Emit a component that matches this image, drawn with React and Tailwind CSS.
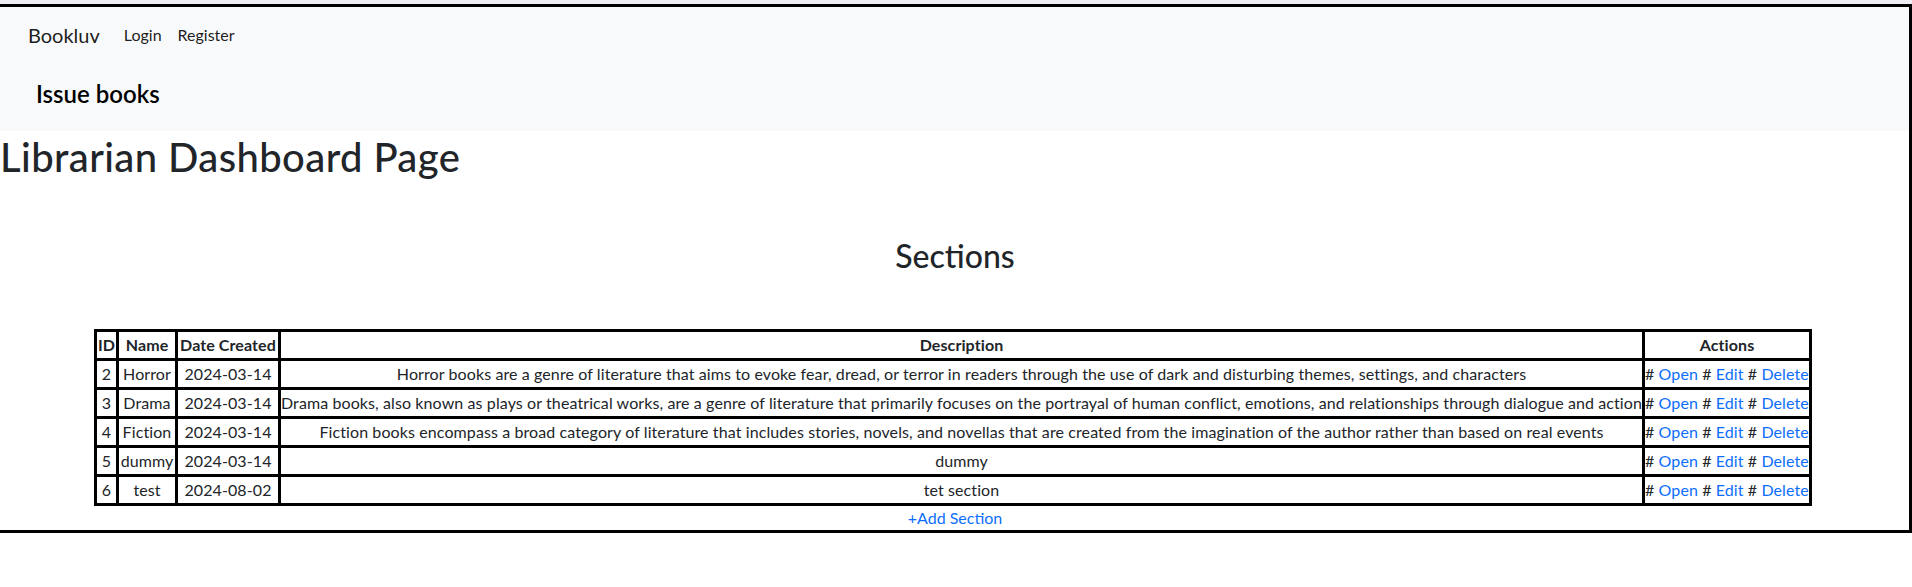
import React from "react";

const sections = [
  { id: 2, name: "Horror", date: "2024-03-14", description: "Horror books are a genre of literature that aims to evoke fear, dread, or terror in readers through the use of dark and disturbing themes, settings, and characters" },
  { id: 3, name: "Drama", date: "2024-03-14", description: "Drama books, also known as plays or theatrical works, are a genre of literature that primarily focuses on the portrayal of human conflict, emotions, and relationships through dialogue and action" },
  { id: 4, name: "Fiction", date: "2024-03-14", description: "Fiction books encompass a broad category of literature that includes stories, novels, and novellas that are created from the imagination of the author rather than based on real events" },
  { id: 5, name: "dummy", date: "2024-03-14", description: "dummy" },
  { id: 6, name: "test", date: "2024-08-02", description: "tet section" },
];

export default function App() {
  const cell = "border-[3px] border-black px-0 py-px text-center whitespace-nowrap";

  return (
    <div className="min-h-screen bg-white pt-[4px] text-[#212529]" style={{ fontFamily: "Lato, 'Noto Sans', sans-serif" }}>
      <div className="bg-[#efeff3] h-[4px] -mt-[4px]" />
      <div className="border-[3px] border-l-0 border-black">
        {/* navbar */}
        <nav className="bg-[#f8f9fa] h-[124px]">
          <div className="flex items-start pt-[8px] pl-[28px]">
            <a href="#" className="text-[20px] leading-[30px] pt-[5px] text-black/90 mr-[24px]">Bookluv</a>
            <a href="#" className="text-[16px] leading-[24px] pt-[8px] text-black/90 mr-[16px]">Login</a>
            <a href="#" className="text-[16px] leading-[24px] pt-[8px] text-black/90">Register</a>
          </div>
          <h4 className="mt-[30px] pl-[36px] text-[24px] leading-[1.2] font-semibold text-black">Issue books</h4>
        </nav>

        <h1 className="mt-[2px] text-[40px] leading-[48px] font-medium tracking-[0.4px]">Librarian Dashboard Page</h1>

        <h2 className="mt-[56px] text-center text-[32px] leading-[38.4px] font-medium pl-[1px]">Sections</h2>

        <table className="mt-[54px] ml-[94px] w-[1718px] table-fixed border-collapse text-[16px] leading-[24px] tracking-[0.1px]">
          <thead>
            <tr>
              <th className={`${cell} w-[22px] font-bold`}>ID</th>
              <th className={`${cell} w-[59px] font-bold`}>Name</th>
              <th className={`${cell} w-[103px] font-bold`}>Date Created</th>
              <th className={`${cell} font-bold`}>Description</th>
              <th className={`${cell} w-[167px] font-bold`}>Actions</th>
            </tr>
          </thead>
          <tbody>
            {sections.map((s) => (
              <tr key={s.id}>
                <td className={cell}>{s.id}</td>
                <td className={cell}>{s.name}</td>
                <td className={cell}>{s.date}</td>
                <td className={cell}>{s.description}</td>
                <td className={`${cell} !text-left`}>
                  # <a href="#" className="text-[#0d6efd]">Open</a> # <a href="#" className="text-[#0d6efd]">Edit</a> # <a href="#" className="text-[#0d6efd]">Delete</a>
                </td>
              </tr>
            ))}
          </tbody>
        </table>
        <div className="text-center pl-[1px] text-[16px] leading-[24px]">
          <a href="#" className="text-[#0d6efd]">+Add Section</a>
        </div>
      </div>
    </div>
  );
}
